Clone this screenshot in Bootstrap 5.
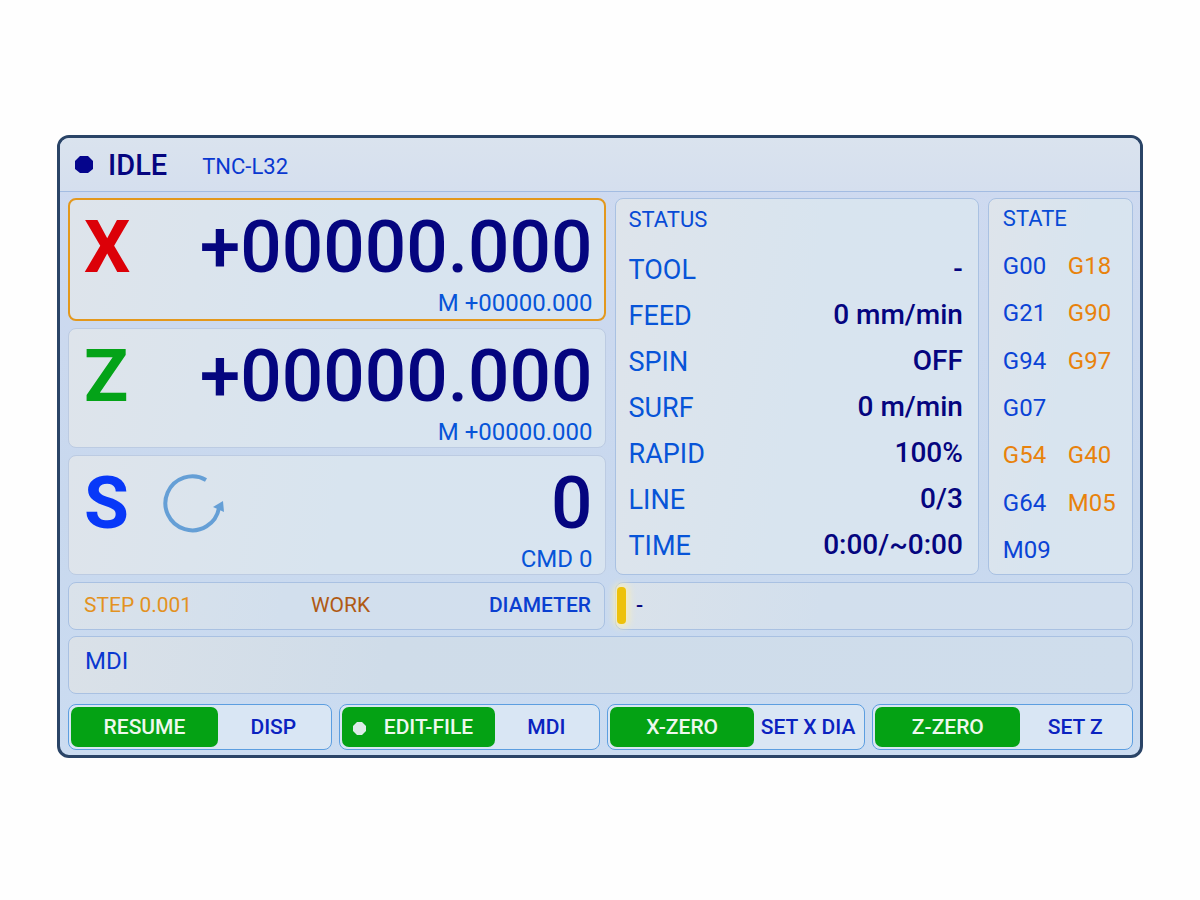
<!DOCTYPE html>
<html lang="en">
<head>
<meta charset="utf-8">
<meta name="viewport" content="width=device-width, initial-scale=1">
<title>TNC-L32 Controller</title>
<link href="https://cdn.jsdelivr.net/npm/bootstrap@5.3.0/dist/css/bootstrap.min.css" rel="stylesheet">
<style>
  :root { --navy:#05057f; --blue:#0754d8; --royal:#0a38d0; --orange:#e8820c; --line:#a9c1e2; }
  body { font-family: Roboto, "Liberation Sans", sans-serif; background:#fefefe; color:var(--navy); }
  .stage { padding:135px 57px 24px; }
  .screen { border:3px solid #2a4467; border-radius:12px; background:linear-gradient(#cfdaf0,#c8d8ee 60%,#cbdcf1); overflow:hidden; }
  .topbar { height:54px; padding:1px 15px 0; background:linear-gradient(#dae3ee,#d5dfee); border-bottom:1px solid #a3bce2; }
  .lamp { width:18px; height:18px; }
  .mode { font-size:29px; line-height:36px; margin-left:15px; font-weight:500; }
  .model { font-size:22px; line-height:30px; margin-left:35px; padding-top:4px; color:var(--royal); }
  .work { padding:6px 7px 5px 8px; }
  .top-grid { display:grid; grid-template-columns:537fr 364fr 145fr; column-gap:9px; }
  .mid-grid { display:grid; grid-template-columns:537fr 518fr; column-gap:10px; margin-top:7px; }
  .key-grid { display:grid; grid-template-columns:264fr 262fr 258fr 261fr; column-gap:7px; margin-top:10px; }
  .pane { border:1px solid var(--line); border-radius:8px; background:linear-gradient(100deg,#dee4eb,#d8e4ef 50%,#d8e4f0); }
  .axes { display:grid; row-gap:7px; }
  .axis { padding:9px 12px 4px 15px; height:120px; border-color:#bccbe2; }
  .axis.active { border:2px solid #e3981d; height:123px; padding:9px 11px 4px 14px; }
  .axis-name, .axis-val { font-size:73px; line-height:76px; font-weight:500; }
  .axis-name { font-weight:700; }
  .axis-sub { font-size:24px; line-height:28px; color:var(--blue); margin-top:4px; }
  .red { color:#dc0008; } .green { color:#04a318; } .azure { color:#0838f8; }
  .spin-icon { width:64px; height:64px; margin-left:32px; margin-top:7px; }
  .status { padding:6px 15px 4px 13px; }
  .cap-text { font-size:22px; line-height:30px; color:#084bd6; margin:0; font-weight:400; }
  .readout { width:100%; margin-top:12px; }
  .readout th, .readout td { height:46px; padding:0; font-size:27px; line-height:32px; }
  .readout th { font-weight:400; color:var(--blue); }
  .readout td { font-size:28px; font-weight:500; text-align:right; vertical-align:top; padding-top:6px; }
  .state { padding:5px 10px 0 14px; }
  .codes { display:grid; grid-template-columns:65px auto; grid-auto-rows:1fr; align-items:center; height:332px; margin:8px 0 0; font-size:24px; line-height:28px; color:#0a43d6; }
  .codes .first { grid-column:1; }
  .hot { color:var(--orange); }
  .strip { height:48px; padding:0 13px 0 15px; font-size:21px; background:linear-gradient(100deg,#dae2ea,#d2dfed 40%,#d2dfee); }
  .step { color:#e3921f; } .frame { color:#b05a14; } .diam { color:#0a3fd0; font-weight:500; }
  .prompt { padding-left:20px; font-weight:500; }
  .caret { position:absolute; left:1px; top:4px; width:9px; height:37px; border-radius:4px; background:#edc10b; box-shadow:0 0 7px 3px #f7edbb; }
  .mdi { height:58px; margin-top:6px; padding:9px 16px; font-size:24px; line-height:30px; color:var(--royal); background:linear-gradient(100deg,#dae1e8,#cfdce9 30%,#cfddec); }
  .keys { border:1px solid #5c9ee0; border-radius:8px; padding:2px; height:46px; background:#d9e6f4; }
  .keys .btn { border:0; border-radius:7px; padding:0; font-size:21px; line-height:28px; font-weight:500; color:#0a22c0; flex:1 1 0; white-space:nowrap; position:relative; }
  .keys .btn.go { background:#04a214; color:#eef8ee; flex:0 0 57%; }
  .keys .btn.wide { flex-basis:60%; padding-left:20px; }
  .dot { position:absolute; left:11px; top:15px; width:13px; height:13px; }
</style>
</head>
<body>
<main class="stage">
  <section class="screen">
    <header class="topbar d-flex align-items-center">
      <svg class="lamp" viewBox="0 0 18 18" aria-hidden="true"><path d="M5 0h8l5 5v8l-5 4H5l-5-4V5z" fill="#05058c"/></svg>
      <div class="mode">IDLE</div>
      <div class="model">TNC-L32</div>
    </header>
    <div class="work">
      <div class="top-grid">
        <div class="axes">
          <div class="pane axis active">
            <div class="d-flex justify-content-between"><div class="axis-name red">X</div><div class="axis-val">+00000.000</div></div>
            <div class="axis-sub text-end">M +00000.000</div>
          </div>
          <div class="pane axis">
            <div class="d-flex justify-content-between"><div class="axis-name green">Z</div><div class="axis-val">+00000.000</div></div>
            <div class="axis-sub text-end">M +00000.000</div>
          </div>
          <div class="pane axis">
            <div class="d-flex"><div class="axis-name azure">S</div>
              <svg class="spin-icon" viewBox="0 0 64 64" aria-hidden="true"><path d="M45 8A27 27 0 1 0 58 36" fill="none" stroke="#659fd6" stroke-width="4"/><path d="M62 29l1 11-11-5z" fill="#659fd6"/></svg>
              <div class="axis-val ms-auto">0</div></div>
            <div class="axis-sub text-end">CMD 0</div>
          </div>
        </div>
        <div class="pane status">
          <h2 class="cap-text">STATUS</h2>
          <table class="readout">
            <tbody>
              <tr><th scope="row">TOOL</th><td>-</td></tr>
              <tr><th scope="row">FEED</th><td>0 mm/min</td></tr>
              <tr><th scope="row">SPIN</th><td>OFF</td></tr>
              <tr><th scope="row">SURF</th><td>0 m/min</td></tr>
              <tr><th scope="row">RAPID</th><td>100%</td></tr>
              <tr><th scope="row">LINE</th><td>0/3</td></tr>
              <tr><th scope="row">TIME</th><td>0:00/~0:00</td></tr>
            </tbody>
          </table>
        </div>
        <div class="pane state">
          <h2 class="cap-text">STATE</h2>
          <ul class="codes list-unstyled">
            <li>G00</li><li class="hot">G18</li>
            <li>G21</li><li class="hot">G90</li>
            <li>G94</li><li class="hot">G97</li>
            <li class="first">G07</li>
            <li class="first hot">G54</li><li class="hot">G40</li>
            <li>G64</li><li class="hot">M05</li>
            <li class="first">M09</li>
          </ul>
        </div>
      </div>
      <div class="mid-grid">
        <div class="pane strip d-flex align-items-center justify-content-between">
          <span class="step">STEP 0.001</span><span class="frame">WORK</span><span class="diam">DIAMETER</span>
        </div>
        <div class="pane strip prompt d-flex align-items-center position-relative"><span class="caret"></span>-</div>
      </div>
      <div class="pane mdi">MDI</div>
      <div class="key-grid">
        <div class="keys d-flex"><button type="button" class="btn go">RESUME</button><button type="button" class="btn">DISP</button></div>
        <div class="keys d-flex"><button type="button" class="btn go wide"><svg class="dot" viewBox="0 0 13 13" aria-hidden="true"><path d="M4 0h5l4 4v5l-4 4H4L0 9V4z" fill="#dcebe8"/></svg>EDIT-FILE</button><button type="button" class="btn">MDI</button></div>
        <div class="keys d-flex"><button type="button" class="btn go">X-ZERO</button><button type="button" class="btn">SET X DIA</button></div>
        <div class="keys d-flex"><button type="button" class="btn go">Z-ZERO</button><button type="button" class="btn">SET Z</button></div>
      </div>
    </div>
  </section>
</main>
<script src="https://cdn.jsdelivr.net/npm/bootstrap@5.3.0/dist/js/bootstrap.bundle.min.js"></script>
</body>
</html>
